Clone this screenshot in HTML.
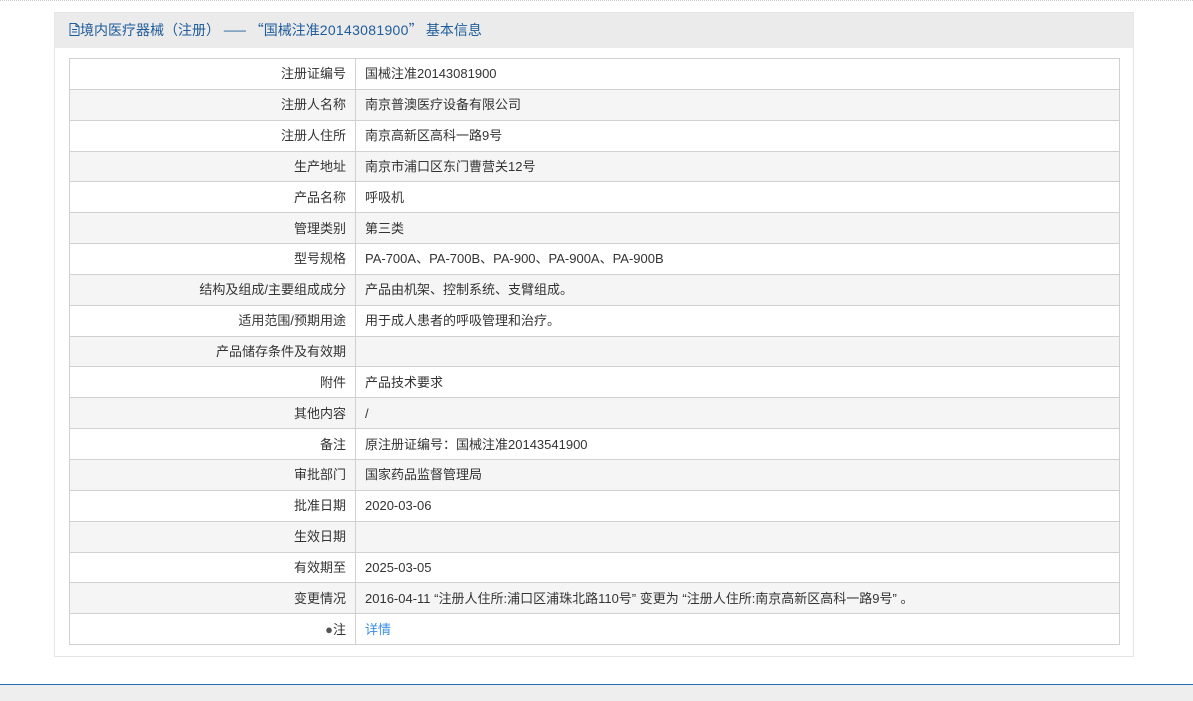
<!DOCTYPE html>
<html><head><meta charset="utf-8"><style>
*{margin:0;padding:0;box-sizing:border-box}
body{width:1193px;height:701px;background:#fff;font-family:"Liberation Sans","Noto Sans CJK SC",sans-serif;font-size:13px;color:#333;position:relative;overflow:hidden}
.dots{position:absolute;top:0;left:0;right:0;height:2px;border-top:1px dotted #ccc}
.panel{position:absolute;left:54px;top:12px;width:1080px;height:645px;border:1px solid #e6e6e6;background:#fff}
.hd{height:35px;background:#ebebeb;color:#1e5c9b;font-size:14px;line-height:35px;padding-left:14px;font-family:"Noto Sans CJK SC",sans-serif;white-space:nowrap}
.hd .n{font-family:"Liberation Sans",sans-serif;letter-spacing:.3px}
table{position:absolute;left:14px;top:45px;width:1051px;border-collapse:collapse}
td{border:1px solid #d0d0d0;height:30.85px;padding:0 9px;line-height:29px}
td.l{width:286px;text-align:right}
tr:nth-child(even) td{background:#f5f5f5}
a{color:#3a8ee6;text-decoration:none}
.foot{position:absolute;left:0;top:684px;width:1193px;height:17px;background:#eee;border-top:1px solid #2a6cb0}
</style></head><body>
<div class="dots"></div>
<div class="panel">
<div class="hd"><svg width="11" height="13" viewBox="0 0 11 13" style="vertical-align:-1px"><path d="M1 .5h6l3 3V12.5H1z M7 .5v3h3 M3 6.5h5 M3 9h5" fill="none" stroke="#1e5c9b"/></svg>境内医疗器械（注册） —— “国械注准<span class="n">20143081900</span>” 基本信息</div>
<table>
<tr><td class="l">注册证编号</td><td>国械注准20143081900</td></tr>
<tr><td class="l">注册人名称</td><td>南京普澳医疗设备有限公司</td></tr>
<tr><td class="l">注册人住所</td><td>南京高新区高科一路9号</td></tr>
<tr><td class="l">生产地址</td><td>南京市浦口区东门曹营关12号</td></tr>
<tr><td class="l">产品名称</td><td>呼吸机</td></tr>
<tr><td class="l">管理类别</td><td>第三类</td></tr>
<tr><td class="l">型号规格</td><td>PA-700A、PA-700B、PA-900、PA-900A、PA-900B</td></tr>
<tr><td class="l">结构及组成/主要组成成分</td><td>产品由机架、控制系统、支臂组成。</td></tr>
<tr><td class="l">适用范围/预期用途</td><td>用于成人患者的呼吸管理和治疗。</td></tr>
<tr><td class="l">产品储存条件及有效期</td><td></td></tr>
<tr><td class="l">附件</td><td>产品技术要求</td></tr>
<tr><td class="l">其他内容</td><td>/</td></tr>
<tr><td class="l">备注</td><td>原注册证编号：国械注准20143541900</td></tr>
<tr><td class="l">审批部门</td><td>国家药品监督管理局</td></tr>
<tr><td class="l">批准日期</td><td>2020-03-06</td></tr>
<tr><td class="l">生效日期</td><td></td></tr>
<tr><td class="l">有效期至</td><td>2025-03-05</td></tr>
<tr><td class="l">变更情况</td><td>2016-04-11 “注册人住所:浦口区浦珠北路110号” 变更为 “注册人住所:南京高新区高科一路9号” 。</td></tr>
<tr><td class="l"><span style="color:#555">●</span>注</td><td><a>详情</a></td></tr>
</table>
</div>
<div class="foot"></div>
</body></html>
